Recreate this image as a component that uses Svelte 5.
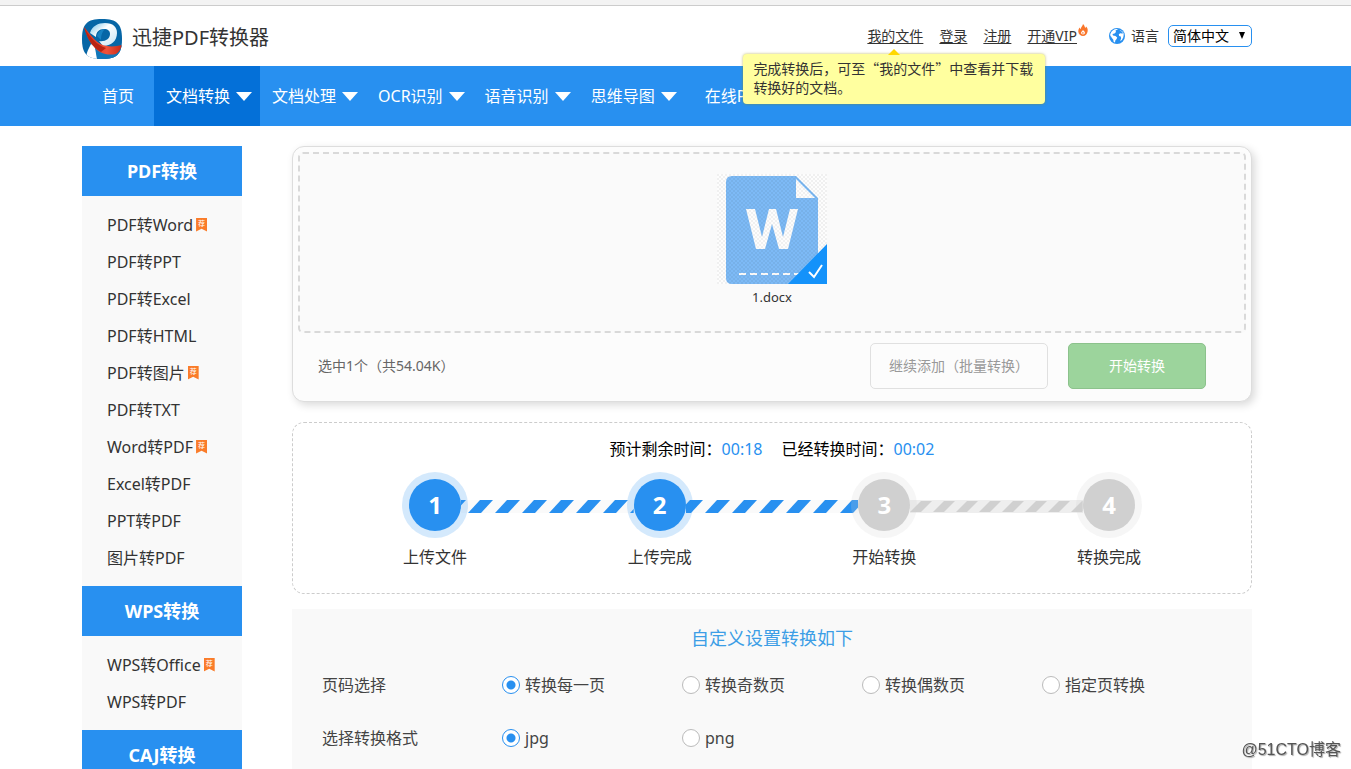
<script>
	const navItems = [
		{ label: '首页' },
		{ label: '文档转换', menu: true, active: true },
		{ label: '文档处理', menu: true },
		{ label: 'OCR识别', menu: true },
		{ label: '语音识别', menu: true },
		{ label: '思维导图', menu: true },
		{ label: '在线PDF转换' },
		{ label: '客户端下载' },
	];

	const groups = [
		{
			title: 'PDF转换',
			items: [
				{ label: 'PDF转Word', hot: true },
				{ label: 'PDF转PPT' },
				{ label: 'PDF转Excel' },
				{ label: 'PDF转HTML' },
				{ label: 'PDF转图片', hot: true },
				{ label: 'PDF转TXT' },
				{ label: 'Word转PDF', hot: true },
				{ label: 'Excel转PDF' },
				{ label: 'PPT转PDF' },
				{ label: '图片转PDF' },
			],
		},
		{
			title: 'WPS转换',
			items: [{ label: 'WPS转Office', hot: true }, { label: 'WPS转PDF' }],
		},
		{ title: 'CAJ转换', items: [] },
	];

	// offset shifts the stripes of the bar that follows the step
	const steps = [
		{ label: '上传文件', done: true, bar: 'blue', offset: 7 },
		{ label: '上传完成', done: true, bar: 'blue', offset: 19 },
		{ label: '开始转换', done: false, bar: 'grey', offset: 0 },
		{ label: '转换完成', done: false },
	];

	const pageOptions = ['转换每一页', '转换奇数页', '转换偶数页', '指定页转换'];
	const formatOptions = ['jpg', 'png'];

	let pages = $state('转换每一页');
	let format = $state('jpg');
	let language = $state('简体中文');
</script>

<div class="page" lang="zh-CN">
	<div class="strip"></div>

	<header class="header">
		<div class="container header-row">
			<a class="brand" href="#home">
				<svg width="40" height="40" viewBox="0 0 40 40" aria-hidden="true">
					<defs>
						<linearGradient id="logo-p" x1="0" y1="0" x2="1" y2="1">
							<stop offset="0" stop-color="#6fbfe8" />
							<stop offset=".4" stop-color="#ffffff" />
							<stop offset="1" stop-color="#c5e4f5" />
						</linearGradient>
						<linearGradient id="logo-red" x1="0" y1="0" x2="1" y2="0">
							<stop offset="0" stop-color="#d9301c" />
							<stop offset=".6" stop-color="#f0523a" />
							<stop offset="1" stop-color="#c42a18" />
						</linearGradient>
						<clipPath id="logo-clip">
							<path d="M20 0C35 0 40 5 40 20S35 40 20 40 0 35 0 20 5 0 20 0z" />
						</clipPath>
					</defs>
					<g clip-path="url(#logo-clip)">
						<path fill="#0666a6" d="M0 0h40v40H0z" />
						<path fill="url(#logo-p)" d="M8 14C10 7 16 4 23 4c8 0 12 4 12 10 0 8-6 13-14 13l-4-5c6 1 11-2 11-7 0-3-2-5-6-5-5 0-8 3-8 8z" />
						<path fill="#1681c2" d="M15 17c1-4 4-7 8-7-2 2-4 5-4 11z" />
						<path fill="#fff" d="M12 27c3 4 3 9 3 13H4c0-6 3-11 5-15z" />
						<path fill="#1277b8" d="M13 29l2 11h25V27z" />
						<path fill="url(#logo-red)" d="M2 8c7 8 13 18 23 19 6 1 10 0 15-1-1 4-3 7-6 9-5 1-10 1-16-2C10 28 5 19 2 8z" />
						<path fill="#b92414" d="M2 8c6 11 13 18 22 21l-5 4C10 28 5 19 2 8z" />
					</g>
				</svg>
				<span>迅捷PDF转换器</span>
			</a>

			<div class="tools">
				<div class="files">
					<a href="#files">我的文件</a>
					<div class="tip" role="tooltip">完成转换后，可至“我的文件”中查看并下载转换好的文档。</div>
				</div>
				<a href="#login">登录</a>
				<a href="#register">注册</a>
				<span class="vip">
					<a href="#vip">开通VIP</a>
					<svg width="10" height="12" viewBox="0 0 10 12" aria-hidden="true">
						<path fill="#f9762b" d="M5 0c2 2 1.600 3 2.300 4 .5-.3.700-.8.700-1.400C9.500 4 10 5.600 9.600 7.500 9.200 10 7.400 12 5 12S.6 10.200.3 7.800C.1 6 1 4.600 1.700 3.600c.2.800.4 1.300.9 1.600C2.800 3 4.900 2 5 0z" />
						<path fill="#fff" d="M5 6c.8 1 1.900 1.600 1.900 2.700S6 10.400 5 10.400 3.100 9.800 3.100 8.700 4.400 7.200 5 6z" />
						<path fill="#f9762b" d="M4.900 7.800c.4.600.8.800.8 1.300s-.3.700-.8.700-.8-.3-.8-.7.500-.8.800-1.300z" />
					</svg>
				</span>
				<label class="lang" for="language">
					<svg width="16" height="16" viewBox="0 0 16 16" aria-hidden="true">
						<circle cx="8" cy="8" r="8" fill="#2890f0" />
						<path fill="#fff" d="M9 1.200 6.500 2.500 7 4 5.500 5.500l-2 .6.500 1.500 2.500.4 1.700 1.500-.6 1.600-1.300 1.400-.3 2-1.300-.6-.5-2.500-1.500-1.600L1.400 7l-.2 2.500C.6 7 1.500 4 4 2.200 5.600 1 7.500.8 9 1.200z" />
						<path fill="#fff" d="M10.500 2.500l2.300.9 1.400 1.800-1.200.4-1.800-.3-1.400 1 .3 1.700 1.700.6.300 1.900-1 2.400 1.800-1 1.300-2.300.4-2.200c.5-2.500-1-5-4.100-4.900z" />
					</svg>
					<span>语言</span>
				</label>
				<div class="select-box">
					<select id="language" bind:value={language}>
						<option>简体中文</option>
						<option>English</option>
					</select>
					<svg width="6" height="7" viewBox="0 0 6 7" aria-hidden="true"><path d="M0 0h6L3 7z" /></svg>
				</div>
			</div>
		</div>
	</header>

	<nav class="nav">
		<div class="container nav-row">
			{#each navItems as item}
				<a href="#nav" class:menu={item.menu} class:active={item.active}>
					{item.label}
					{#if item.menu}
						<svg width="16" height="9" viewBox="0 0 16 9" aria-hidden="true"><path fill="#fff" d="M0 0h16L8 9z" /></svg>
					{/if}
				</a>
			{/each}
		</div>
	</nav>

	<div class="container body">
		<aside class="sidebar">
			{#each groups as group}
				<h2>{group.title}</h2>
				<ul>
					{#each group.items as item}
						<li>
							<a href="#convert">{item.label}</a>
							{#if item.hot}
								<span class="hot">荐</span>
							{/if}
						</li>
					{/each}
				</ul>
			{/each}
		</aside>

		<main>
			<section class="upload">
				<div class="drop">
					<figure>
						<svg width="110" height="110" viewBox="0 0 110 110" aria-hidden="true">
							<defs>
								<pattern id="checks" width="4" height="4" patternUnits="userSpaceOnUse">
									<path fill="#000" fill-opacity=".05" d="M0 0h2v2H0zM2 2h2v2H2z" />
								</pattern>
							</defs>
							<path fill="#fdfdfd" d="M0 0h110v110H0z" />
							<path fill="#7dbaf6" d="M15 2h64l22 22v86H15q-6 0-6-6V8q0-6 6-6z" />
							<path fill="#fdfdfd" d="M79 5v19h19z" />
							<path fill="#fdfdfd" d="M29 35h9l7 28 7-28h7l7 28 7-28h8l-10 40h-9l-7-25-7 25h-9z" />
							<path fill="none" stroke="#fdfdfd" stroke-width="2" stroke-dasharray="7 4" d="M22 100h60" />
							<path fill="url(#checks)" d="M0 0h110v110H0z" />
							<path fill="#1492fa" d="M110 70v40H71z" />
							<path fill="none" stroke="#fff" stroke-width="2" d="M92 98l5 5 8-12" />
						</svg>
						<figcaption>1.docx</figcaption>
					</figure>
				</div>
				<div class="actions">
					<span class="count">选中1个（共54.04K）</span>
					<button type="button" class="add">继续添加（批量转换）</button>
					<button type="button" class="start">开始转换</button>
				</div>
			</section>

			<section class="progress">
				<div class="times">
					<span>预计剩余时间：<b>00:18</b></span>
					<span>已经转换时间：<b>00:02</b></span>
				</div>
				<div class="steps">
					{#each steps as step, i}
						<div class="step" class:done={step.done}>
							<div class="ring"><span>{i + 1}</span></div>
							<p>{step.label}</p>
						</div>
						{#if step.bar}
							<svg class="bar {step.bar}" height="13" aria-hidden="true">
								<defs>
									{#if step.bar === 'blue'}
										<pattern id="stripes-{i}" x={step.offset} width="27" height="13" patternUnits="userSpaceOnUse">
											<path fill="#2890f0" d="M0 13h13L25 0H12z" />
										</pattern>
									{:else}
										<pattern id="stripes-{i}" x={step.offset} width="23" height="13" patternUnits="userSpaceOnUse">
											<path fill="#d0d0d0" d="M0 12h11L22 1H11z" />
										</pattern>
									{/if}
								</defs>
								<rect width="100%" height="13" fill="url(#stripes-{i})" />
							</svg>
						{/if}
					{/each}
				</div>
			</section>

			<section class="settings">
				<h3>自定义设置转换如下</h3>
				<div class="row" role="radiogroup" aria-labelledby="pages-label">
					<span id="pages-label">页码选择</span>
					{#each pageOptions as option}
						<label><input type="radio" name="pages" value={option} bind:group={pages} />{option}</label>
					{/each}
				</div>
				<div class="row" role="radiogroup" aria-labelledby="format-label">
					<span id="format-label">选择转换格式</span>
					{#each formatOptions as option}
						<label><input type="radio" name="format" value={option} bind:group={format} />{option}</label>
					{/each}
				</div>
			</section>
		</main>
	</div>

	<div class="watermark">@51CTO博客</div>
</div>

<style>
	:global(body) {
		background: #fff;
	}

	.page {
		height: 100vh;
		overflow: hidden;
		display: flex;
		flex-direction: column;
		color: #333;
		font-family: 'Noto Sans', 'Noto Sans CJK SC', sans-serif;
		font-size: 16px;
		line-height: 24px;
		box-sizing: border-box;
	}

	.page :global(*) {
		box-sizing: border-box;
	}

	a {
		color: inherit;
		text-decoration: none;
	}

	.strip {
		flex: none;
		height: 6px;
		background: #f3f3f3;
		border-bottom: 1px solid #ccc;
	}

	.header,
	.nav,
	.body {
		flex: none;
	}

	.container {
		width: 100%;
		max-width: 1187px;
		margin: 0 auto;
		padding-right: 17px;
	}

	.header-row {
		height: 60px;
		display: flex;
		align-items: center;
		justify-content: space-between;
	}

	.brand {
		display: flex;
		align-items: center;
		gap: 10px;
		padding-top: 6px;
		font-size: 20px;
	}

	.brand span {
		padding-bottom: 2px;
	}

	.tools {
		display: flex;
		align-items: center;
		gap: 16px;
		font-size: 14px;
	}

	.tools a {
		text-decoration: underline;
		text-underline-offset: 2px;
	}

	.files {
		position: relative;
	}

	.tip {
		position: absolute;
		z-index: 5;
		top: 30px;
		right: -122px;
		width: 302px;
		padding: 5px 10px 7px;
		border-radius: 4px;
		background: #ffff9f;
		box-shadow: 0 0 3px rgba(150, 140, 0, 0.6);
		font-family: 'Noto Sans CJK SC', sans-serif;
		line-height: 19px;
	}

	.tip::before {
		content: '';
		position: absolute;
		top: -5px;
		left: 145px;
		border: 6px solid transparent;
		border-top: 0;
		border-bottom-color: #ffd800;
	}

	.vip {
		display: flex;
		gap: 1px;
	}

	.lang {
		display: flex;
		align-items: center;
		gap: 6px;
		margin-left: 5px;
	}

	.select-box {
		position: relative;
		margin-left: -7px;
	}

	.select-box svg {
		position: absolute;
		right: 7px;
		top: 7px;
		pointer-events: none;
	}

	select {
		display: block;
		width: 84px;
		height: 22px;
		padding: 0 4px;
		appearance: none;
		border: 1px solid #2890f0;
		border-radius: 5px;
		background: #fff;
		color: #000;
		font: inherit;
		line-height: 20px;
	}

	.nav {
		background: #2890f0;
		color: #fff;
	}

	.nav-row {
		display: flex;
	}

	.nav a {
		display: flex;
		align-items: center;
		gap: 6px;
		height: 60px;
		padding: 0 20px;
		white-space: nowrap;
	}

	.nav a.menu {
		padding: 0 8px 0 12px;
	}

	.nav a.active {
		background: #0470d8;
	}

	.body {
		display: flex;
		align-items: flex-start;
		gap: 50px;
		padding-top: 20px;
	}

	.sidebar {
		flex: none;
		width: 160px;
		background: #f9f9f9;
	}

	h2 {
		margin: 0;
		background: #2890f0;
		color: #fff;
		font-size: 18px;
		font-weight: 700;
		line-height: 50px;
		text-align: center;
	}

	ul {
		margin: 0;
		padding: 10px 0 10px 25px;
		list-style: none;
	}

	li {
		display: flex;
		align-items: center;
		gap: 3px;
		height: 37px;
	}

	.hot {
		width: 11px;
		height: 14px;
		background: #fa7c2a;
		color: #fff;
		clip-path: polygon(0 0, 100% 0, 100% 100%, 50% 80%, 0 100%);
		font-size: 7px;
		line-height: 12px;
		text-align: center;
	}

	main {
		flex: 1;
		min-width: 0;
	}

	.upload {
		padding: 5px;
		border: 1px solid #ddd;
		border-radius: 12px;
		background: #fcfcfc;
		box-shadow: 3px 3px 8px rgba(0, 0, 0, 0.15);
	}

	.drop {
		height: 181px;
		padding-top: 20px;
		border: 2px dashed #d9d9d9;
		border-radius: 5px;
		background: #fafafa;
	}

	figure {
		display: flex;
		flex-direction: column;
		align-items: center;
		margin: 0;
	}

	figcaption {
		font-size: 13px;
		line-height: 26px;
	}

	.actions {
		display: flex;
		align-items: center;
		gap: 20px;
		padding: 10px 40px 7px 20px;
		font-size: 14px;
	}

	.count {
		margin-right: auto;
		color: #666;
	}

	button {
		height: 46px;
		border-radius: 5px;
		font: inherit;
	}

	.add {
		width: 178px;
		border: 1px solid #e0e0e0;
		background: #fcfcfc;
		color: #999;
	}

	.start {
		width: 138px;
		border: 1px solid #8cc28c;
		background: #9cd49c;
		color: #fff;
	}

	.progress {
		margin-top: 20px;
		padding: 14px 20px 24px;
		border: 1px dashed #ccc;
		border-radius: 12px;
	}

	.times {
		display: flex;
		justify-content: center;
		gap: 19px;
		color: #000;
	}

	.times b {
		color: #2890f0;
		font-weight: 400;
	}

	.steps {
		display: flex;
		max-width: 740px;
		margin: 11px auto 0;
	}

	.step {
		position: relative;
		z-index: 1;
		flex: none;
		width: 66px;
		text-align: center;
		white-space: nowrap;
	}

	.ring {
		height: 66px;
		padding: 7px;
		border-radius: 50%;
		background: rgba(208, 208, 208, 0.2);
	}

	.ring span {
		display: block;
		border-radius: 50%;
		background: #d0d0d0;
		color: #fff;
		font-size: 24px;
		font-weight: 700;
		line-height: 52px;
	}

	.done .ring {
		background: rgba(40, 144, 240, 0.2);
	}

	.done .ring span {
		background: #2890f0;
	}

	.step p {
		margin: 7px 0 0;
	}

	.bar {
		flex: 1;
		min-width: 0;
		margin: 28px -7px 0;
	}

	.bar.blue {
		background: #fafafa;
	}

	.bar.grey {
		background: #eee;
	}

	.settings {
		margin-top: 15px;
		padding: 17px 30px 20px;
		background: #f9f9f9;
		color: #444;
	}

	h3 {
		margin: 0 0 8px;
		color: #3c9ee6;
		font-size: 18px;
		font-weight: 400;
		text-align: center;
	}

	.row {
		display: grid;
		grid-template-columns: repeat(5, 180px);
		align-items: center;
		height: 53px;
	}

	.row label {
		display: flex;
		align-items: center;
		gap: 5px;
	}

	input[type='radio'] {
		width: 18px;
		height: 18px;
		margin: 0;
		appearance: none;
		border: 1px solid #bbb;
		border-radius: 50%;
		background: #fff;
	}

	input[type='radio']:checked {
		border-color: #2890f0;
		background: radial-gradient(circle, #2890f0 4px, #fff 5px);
	}

	.watermark {
		position: fixed;
		right: 10px;
		bottom: 7px;
		color: #555;
		font-family: 'Liberation Sans', 'Noto Sans CJK SC', sans-serif;
		text-shadow: 1px 1px 1px #aaa, -1px -1px 0 #fff;
	}
</style>
